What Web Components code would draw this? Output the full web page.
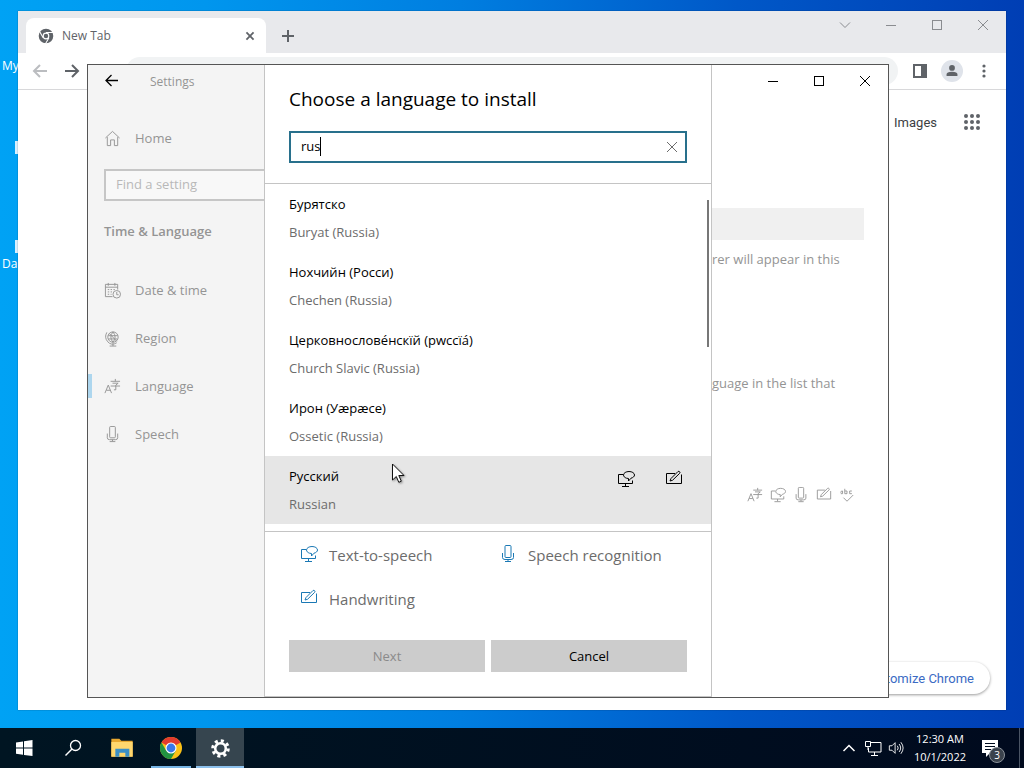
<!DOCTYPE html>
<html lang="en">
<head>
<meta charset="utf-8">
<meta name="viewport" content="width=device-width, initial-scale=1">
<title>Desktop</title>
<style>
  html,body{height:100%;margin:0}
  body{font-family:"Open Sans","Noto Sans",sans-serif;font-size:13px;overflow:hidden}
</style>
</head>
<body>
<desktop-shell>
  <chrome-window></chrome-window>
  <settings-window>
    <language-dialog slot="dialog"></language-dialog>
  </settings-window>
  <task-bar slot="taskbar"></task-bar>
</desktop-shell>

<script>
// ui-icon: inline SVG by name, size comes from the "size" attribute
const tts = '<path d="M6 4.500H1.500V13.500H15.500V10.500M8.500 13.500V16M5 16.500H12"/><path d="M9.500 8.200C7.500 7.500 6.500 6.300 6.500 5C6.500 3 9 1.500 12 1.500S17.500 3 17.500 5C17.500 6.500 16 7.700 14 8.200L11.500 11V8.500Z"/>';
const pen = '<path d="M10 3.500H1.500V13.500H16.500V4.500"/><path d="M5 11L6 8.500 13 1.500Q14 1 14.700 1.800T14.500 3.500L7.500 10.300Z"/>';
const mic = '<rect x="6" y=".5" width="6" height="12" rx="1"/><path d="M3.500 8V12.500Q3.500 14.500 6 14.500H12Q14.500 14.500 14.500 12.500V8M9 14.500V16M6 16.500H12"/>';
const lang = '<path d="M1 16L4.500 7.500 8 16M2.500 13H6.500"/><path d="M7 3.500H17M12 1V3.500M9 5.500H15L12.500 7.500V12.500H10.500M7 8.500H17"/>';
const ICONS = {
  tts, pen, mic, lang,
  back:'<path d="M3.500 8.500H15M8.500 3L3 8.500 8.500 14" stroke-width="1.300"/>',
  home:'<path d="M1.500 8.500L9 1.500 16.500 8.500M3.500 7.500V16.500H7V10.500H11V16.500H14.500V7.500"/>',
  date:'<path d="M9 15.500H1.500V2.500H14.500V8M1.500 5.500H14.500M4.500 1V4M11.500 1V4"/><path d="M4 8H12M4 10.500H9M4 13H8" stroke-dasharray="1.500 1.500"/><circle cx="13.500" cy="13" r="4"/><path d="M13.500 10.500V13.500H15.500"/>',
  region:'<circle cx="9.500" cy="7.500" r="5.500"/><path d="M4.500 6H14.500M4.500 9.500H14M9.500 2Q5 7.500 9.500 13Q14 7.500 9.500 2M5.500 3.500L13.500 12M3 2.500Q0 8 4 12.500T13.500 13.500M9.500 14V17M6 17H13"/>',
  spell:'<path d="M2 6.500Q2 4 4 4.500V7.500H2M6.500 2V7.500H9V4.500H6.500M14.500 4.500H12V7.500H14.500M5 12L9 16 16 9"/>',
  min:'<path d="M4 9.500H14" shape-rendering="crispEdges"/>',
  max:'<rect x="4.500" y="4.500" width="9" height="9" shape-rendering="crispEdges"/>',
  close:'<path d="M4 4L14 14M14 4L4 14"/>',
  down:'<path d="M4 6.500L9 11.500 14 6.500"/>',
  up:'<path d="M3.500 12L9 6.500 14.500 12" stroke-width="1.500"/>',
  plus:'<path d="M9 3V15M3 9H15" stroke-width="2"/>',
  arrowl:'<path d="M3 9H16M9 3L3 9 9 15" stroke-width="2"/>',
  arrowr:'<path d="M2 9H15M9 3L15 9 9 15" stroke-width="2"/>',
  tabx:'<path d="M5 5L13 13M13 5L5 13" stroke-width="2"/>',
  panel:'<path d="M2 2H16V16H2ZM4 4V14H10V4Z" fill="currentColor" fill-rule="evenodd" stroke="none"/>',
  person:'<g fill="currentColor" stroke="none"><circle cx="9" cy="5" r="3.700"/><path d="M2 15.500V13.500Q2 10 9 10T16 13.500V15.500Z"/></g>',
  dots:'<g fill="currentColor" stroke="none"><circle cx="9" cy="4" r="1.600"/><circle cx="9" cy="9" r="1.600"/><circle cx="9" cy="14" r="1.600"/></g>',
  apps:'<g fill="currentColor" stroke="none">'+[3,9,15].map(y=>[3,9,15].map(x=>`<circle cx="${x}" cy="${y}" r="2"/>`).join('')).join('')+'</g>',
  mono:'<circle cx="9" cy="9" r="6" stroke-width="4.400"/><circle cx="9" cy="9" r="2.500" fill="currentColor" stroke="none"/><path d="M9 5H17M5.800 11L1.800 4M12.300 11L8.300 18"  stroke="#fff" stroke-width="1.200"/>',
  win:'<path d="M1 3.400L8 2.400V8.500H1ZM9 2.200L17.500 1V8.500H9ZM1 9.500H8V15.700L1 14.700ZM9 9.500H17.500V17L9 15.900Z" fill="currentColor" stroke="none"/>',
  search:'<circle cx="11.500" cy="6.500" r="5" stroke-width="1.300"/><path d="M8 10L1.500 16.500" stroke-width="1.500"/>',
  folder:'<g stroke="none"><path d="M1 2H7L8.500 3.500H17V15.500H1Z" fill="#e8a830"/><path d="M1 4.500H17V15.500H1Z" fill="#ffd76e"/><path d="M4 9.500H14.500V15.500H11.500V12.500H7V15.500H4Z" fill="#3b8fc6"/></g>',
  chrome:'<g stroke="none"><circle cx="9" cy="9" r="9" fill="#fbc116"/><path d="M9 9L1.200 4.500A9 9 0 0 1 16.800 4.500Z" fill="#e33b2e"/><path d="M1.200 4.500A9 9 0 0 0 9 18L12.900 11.250 9 9 5.100 11.250Z" fill="#229342"/><circle cx="9" cy="9" r="4.500" fill="#fff"/><circle cx="9" cy="9" r="3.600" fill="#3a78ea"/></g>',
  gear:'<circle cx="9" cy="9" r="5" stroke-width="2.400"/><circle cx="9" cy="9" r="7.300" stroke-width="3" stroke-dasharray="2.870 2.870"/>',
  net:'<path d="M6 3.500H17V13H4.500V9M10.500 13V16M7 16.500H14M1.500 2.500H6.500V7.500H1.500ZM4 7.500V11"/>',
  sound:'<path d="M1.500 6.500H4.500L8 3V15L4.500 11.500H1.500Z"/><path d="M10.500 6.500Q12.500 9 10.500 11.500M12.500 4.500Q16 9 12.500 13.500M14.500 2.500Q19.500 9 14.500 15.500"/>',
  note:'<path d="M1 1H17V14H9L5 18V14H1Z" fill="currentColor" stroke="none"/><path d="M4 4.500H14M4 7.500H14M4 10.500H10" stroke="#000c1e"/>'
};

customElements.define('ui-icon', class extends HTMLElement{
  constructor(){ super(); this.attachShadow({mode:'open'}); }
  connectedCallback(){
    const size = this.getAttribute('size') || 18;
    this.shadowRoot.innerHTML = `
      <style>:host{display:inline-flex;flex:none}svg{display:block}</style>
      <svg width="${size}" height="${size}" viewBox="0 0 18 18" fill="none" stroke="currentColor" aria-hidden="true">${ICONS[this.getAttribute('name')]||''}</svg>
    `;
  }
});

// shared reset for controls inside a shadow root
const BASE = `
  *{box-sizing:border-box}
  button{font:inherit;color:inherit;background:none;border:0;padding:0;display:flex;align-items:center;justify-content:center}
  input{font:inherit}
  h1,h2,p,ul{margin:0;padding:0}
  ul{list-style:none}
`;

// desktop-shell: wallpaper, window area and the taskbar under it
customElements.define('desktop-shell', class extends HTMLElement{
  constructor(){
    super(); this.attachShadow({mode:'open'});
    this.shadowRoot.innerHTML = `
      <style>
        ${BASE}
        :host{display:flex;flex-direction:column;height:100vh;min-height:600px}
        .area{flex:1;position:relative;overflow:hidden;background:linear-gradient(90deg,#00a2f4 0,#0096ee 20%,#007ee0 45%,#0058c8 72%,#003eb4 100%)}
        .labels{display:flex;flex-direction:column;gap:178px;padding:56px 0 0 2px;color:#fff;font-size:12px;line-height:20px}
        .sliver{position:absolute;left:15px;width:8px;height:13px;background:#d8f0ff}
        .one{top:141px}.two{top:240px}
      </style>
      <div class="area">
        <div class="labels"><span>My</span><span>Da</span></div>
        <i class="sliver one"></i><i class="sliver two"></i>
        <slot></slot>
        <mouse-pointer></mouse-pointer>
      </div>
      <slot name="taskbar"></slot>
    `;
  }
});

customElements.define('mouse-pointer', class extends HTMLElement{
  constructor(){
    super(); this.attachShadow({mode:'open'});
    this.shadowRoot.innerHTML = `
      <style>:host{display:block;position:absolute;left:392px;top:463px;z-index:3;pointer-events:none}svg{display:block;filter:drop-shadow(1px 1px 1px #0006)}</style>
      <svg width="14" height="21" viewBox="0 0 14 21"><path d="M.5 1V17L4.300 13.500 6.800 19.300 9.300 18.200 6.800 12.500H12Z" fill="#fff" stroke="#111"/></svg>
    `;
  }
});

customElements.define('chrome-window', class extends HTMLElement{
  constructor(){
    super(); this.attachShadow({mode:'open'});
    this.shadowRoot.innerHTML = `
      <style>
        ${BASE}
        :host{position:absolute;inset:11px 18px 18px;display:flex;flex-direction:column;background:#fff;color:#5f6368;box-shadow:0 0 1px #0008}
        .tabs{display:flex;align-items:flex-end;height:42px;background:#e8e9ec;padding-left:8px;flex:none}
        .tab{display:flex;align-items:center;gap:8px;width:240px;height:35px;padding:0 8px 0 12px;background:#fff;border-radius:8px 8px 0 0;font-size:12px}
        .tab span{flex:1}
        .new{width:28px;height:34px;margin-left:8px}
        .caption{display:flex;align-self:flex-start;margin-left:auto;color:#8a8c90}
        .caption button{width:46px;height:28px}
        .tools{display:flex;align-items:center;height:37px;border-bottom:1px solid #d8d8da;padding:0 6px;flex:none}
        .tools button{width:32px;height:32px}
        .dim{color:#bbbdc0}
        .omni{flex:1;min-width:0;height:28px;margin:0 6px 0 38px;border:0;border-radius:14px;background:#f1f3f4}
        .avatar ui-icon{background:#dfe3ea;border-radius:50%;padding:4px}
        .page{flex:1;display:flex;flex-direction:column;align-items:flex-end;justify-content:space-between;padding:16px}
        .links{display:flex;align-items:center;gap:26px;height:32px;padding-right:9px;font:13px Roboto,sans-serif}
        .links a{color:#3c4043;text-decoration:none}
        .custom{height:32px;padding:0 16px;border-radius:16px;box-shadow:0 1px 3px #0006;color:#3b6bc4;font:13px Roboto,sans-serif;background:#fff}
      </style>
      <div class="tabs">
        <div class="tab"><ui-icon name="mono" size="16"></ui-icon><span>New Tab</span><button aria-label="Close tab"><ui-icon name="tabx" size="16"></ui-icon></button></div>
        <button class="new" aria-label="New tab"><ui-icon name="plus"></ui-icon></button>
        <div class="caption">
          <button aria-label="Search tabs"><ui-icon name="down"></ui-icon></button>
          <button aria-label="Minimize"><ui-icon name="min"></ui-icon></button>
          <button aria-label="Maximize"><ui-icon name="max"></ui-icon></button>
          <button aria-label="Close"><ui-icon name="close"></ui-icon></button>
        </div>
      </div>
      <div class="tools">
        <button class="dim" aria-label="Back"><ui-icon name="arrowl"></ui-icon></button>
        <button aria-label="Forward"><ui-icon name="arrowr"></ui-icon></button>
        <input class="omni" aria-label="Address">
        <button aria-label="Side panel"><ui-icon name="panel"></ui-icon></button>
        <button class="avatar" aria-label="Profile"><ui-icon name="person" size="14"></ui-icon></button>
        <button aria-label="Menu"><ui-icon name="dots"></ui-icon></button>
      </div>
      <div class="page">
        <div class="links"><a href="#">Images</a><button aria-label="Apps"><ui-icon name="apps"></ui-icon></button></div>
        <button class="custom">Customize Chrome</button>
      </div>
    `;
  }
});

// nav-item: sidebar row, icon attribute + slotted label
customElements.define('nav-item', class extends HTMLElement{
  constructor(){ super(); this.attachShadow({mode:'open'}); }
  connectedCallback(){
    this.shadowRoot.innerHTML = `
      <style>
        :host{display:block}
        a{display:flex;align-items:center;gap:14px;height:48px;padding-left:12px;border-left:4px solid transparent;color:inherit;text-decoration:none;line-height:20px}
        :host([selected]) a{background:linear-gradient(#add6ee,#add6ee) left center/4px 24px no-repeat border-box}
      </style>
      <a href="#"><ui-icon name="${this.getAttribute('icon')}" size="17"></ui-icon><slot></slot></a>
    `;
  }
});

customElements.define('settings-window', class extends HTMLElement{
  constructor(){
    super(); this.attachShadow({mode:'open'});
    this.shadowRoot.innerHTML = `
      <style>
        ${BASE}
        :host{position:absolute;inset:64px 135px 30px 87px;display:grid;grid-template-columns:1fr 448px 1fr;border:1px solid #555;background:#fff;z-index:1;color:#949494}
        nav,main{min-width:0;overflow:hidden}
        nav{background:#f4f4f4}
        .title{display:flex;align-items:center;height:32px}
        .back{width:48px;height:32px;color:#000}
        .title span{font-size:12px;padding-left:14px}
        .home{display:block;margin-top:17px}
        .find{display:block;height:32px;width:240px;margin:7px 0 0 16px;padding:0 10px 2px;border:2px solid #c6c6c6;background:#f8f8f8}
        .find::placeholder{color:#b8b8b8;opacity:1}
        h2{font-size:13px;font-weight:600;line-height:20px;margin:20px 0 25px 16px}
        .caption{display:flex;justify-content:flex-end;color:#000}
        .caption button{width:46px;height:32px}
        .select{display:block;appearance:none;width:calc(100% - 24px);height:32px;margin-top:111px;border:0;border-radius:0;background:#eaeaea}
        p{line-height:20px;white-space:nowrap}
        .first{margin-top:9px}.second{margin-top:104px}
        .icons{display:flex;justify-content:flex-end;gap:7px;margin-top:94px;padding-right:33px}
      </style>
      <nav>
        <div class="title"><button class="back" aria-label="Back"><ui-icon name="back"></ui-icon></button><span>Settings</span></div>
        <nav-item class="home" icon="home">Home</nav-item>
        <input class="find" placeholder="Find a setting" aria-label="Find a setting">
        <h2>Time &amp; Language</h2>
        <nav-item icon="date">Date &amp; time</nav-item>
        <nav-item icon="region">Region</nav-item>
        <nav-item icon="lang" selected>Language</nav-item>
        <nav-item icon="mic">Speech</nav-item>
      </nav>
      <slot name="dialog"></slot>
      <main>
        <div class="caption">
          <button aria-label="Minimize"><ui-icon name="min"></ui-icon></button>
          <button aria-label="Maximize"><ui-icon name="max"></ui-icon></button>
          <button aria-label="Close"><ui-icon name="close"></ui-icon></button>
        </div>
        <select class="select" aria-label="Windows display language" disabled></select>
        <p class="first">rer will appear in this</p>
        <p class="second">guage in the list that</p>
        <div class="icons">
          <ui-icon name="lang" size="16"></ui-icon><ui-icon name="tts" size="16"></ui-icon><ui-icon name="mic" size="16"></ui-icon><ui-icon name="pen" size="16"></ui-icon><ui-icon name="spell" size="16"></ui-icon>
        </div>
      </main>
    `;
  }
});

// language-row: native name in the slot, English name in the "english" attribute
customElements.define('language-row', class extends HTMLElement{
  constructor(){ super(); this.attachShadow({mode:'open'}); }
  connectedCallback(){
    const icons = (this.getAttribute('features')||'').split(' ').filter(Boolean);
    this.shadowRoot.innerHTML = `
      <style>
        :host{display:flex;justify-content:space-between;padding:6px 28px 6px 24px;line-height:28px}
        :host([active]){background:#e6e6e6}
        .name{color:#000}
        .english{color:#6c6c6c}
        .icons{display:flex;gap:30px;padding-top:8px;color:#000}
      </style>
      <div><div class="name"><slot></slot></div><div class="english">${this.getAttribute('english')}</div></div>
      <div class="icons">${icons.map(n=>`<ui-icon name="${n}"></ui-icon>`).join('')}</div>
    `;
  }
});

const LANGUAGES = [
  {name:'Бурятско', english:'Buryat (Russia)'},
  {name:'Нохчийн (Росси)', english:'Chechen (Russia)'},
  {name:'Церковнослове́нскїй (рwссїа́)', english:'Church Slavic (Russia)'},
  {name:'Ирон (Уæрæсе)', english:'Ossetic (Russia)'},
  {name:'Русский', english:'Russian', features:'tts pen', active:true}
];

customElements.define('language-dialog', class extends HTMLElement{
  constructor(){
    super(); this.attachShadow({mode:'open'});
    const rows = LANGUAGES.map(l=>`<li><language-row english="${l.english}" features="${l.features||''}" ${l.active?'active':''}>${l.name}</language-row></li>`).join('');
    this.shadowRoot.innerHTML = `
      <style>
        ${BASE}
        :host{display:flex;flex-direction:column;min-height:0;background:#fff;border:1px solid #c4c4c4;border-top:0;color:#6c6c6c}
        header{padding:20px 24px;border-bottom:1px solid #c4c4c4}
        h1{font-size:19px;font-weight:400;line-height:28px;color:#000}
        .field{position:relative;display:flex;align-items:center;height:32px;margin-top:18px;border:2px solid #28708c}
        .field input{flex:1;min-width:0;border:0;outline:0;padding:0 10px 2px;background:none;color:#000}
        .field button{width:26px;height:28px}
        .caret{position:absolute;left:29px;top:4px;width:1px;height:19px;background:#000}
        .list{position:relative;flex:1;min-height:0;overflow:hidden}
        .thumb{position:absolute;right:2px;top:16px;width:2px;height:147px;background:#777}
        footer{border-top:1px solid #c4c4c4;padding:1px 24px 24px}
        .legend{display:grid;grid-template-columns:1fr 1fr;font-size:15px}
        .legend li{display:flex;align-items:center;gap:11px;height:44px;padding-left:11px}
        .legend ui-icon{color:#1a78b4;padding-bottom:2px}
        .actions{display:grid;grid-template-columns:1fr 1fr;gap:6px;margin-top:19px}
        .actions button{height:32px;background:#ccc;color:#000}
        .actions button:disabled{color:#8a8a8a}
      </style>
      <header>
        <h1>Choose a language to install</h1>
        <div class="field">
          <input value="rus" aria-label="Type a language name">
          <i class="caret"></i>
          <button aria-label="Clear"><ui-icon name="close"></ui-icon></button>
        </div>
      </header>
      <div class="list"><ul>${rows}</ul><i class="thumb"></i></div>
      <footer>
        <ul class="legend">
          <li><ui-icon name="tts"></ui-icon>Text-to-speech</li>
          <li><ui-icon name="mic"></ui-icon>Speech recognition</li>
          <li><ui-icon name="pen"></ui-icon>Handwriting</li>
        </ul>
        <div class="actions"><button disabled>Next</button><button>Cancel</button></div>
      </footer>
    `;
  }
});

customElements.define('task-bar', class extends HTMLElement{
  constructor(){
    super(); this.attachShadow({mode:'open'});
    this.shadowRoot.innerHTML = `
      <style>
        ${BASE}
        :host{display:flex;justify-content:space-between;height:40px;flex:none;background:linear-gradient(90deg,#001522,#000a1e);color:#fff}
        .apps{display:flex;gap:1px}
        .apps button{width:48px;height:40px}
        .open{background:linear-gradient(#76b4e4,#76b4e4) center bottom/40px 2px no-repeat}
        .apps .active{background:linear-gradient(#8cc0ec,#8cc0ec) center bottom/100% 2px no-repeat #36454f}
        .tray{display:flex;align-items:center;gap:6px;padding-right:4px}
        .clock{font-size:11px;line-height:18px;text-align:center;padding-left:4px}
        .note{position:relative;width:36px;height:40px}
        .badge{position:absolute;left:17px;top:19px;width:16px;height:16px;border-radius:50%;background:#3a424c;border:1px solid #8b929a;font-size:10px;line-height:14px}
        .peek{width:1px;height:40px;margin-left:5px;background:#4a5464}
      </style>
      <div class="apps">
        <button aria-label="Start"><ui-icon name="win"></ui-icon></button>
        <button aria-label="Search"><ui-icon name="search"></ui-icon></button>
        <button aria-label="File Explorer"><ui-icon name="folder" size="24"></ui-icon></button>
        <button class="open" aria-label="Chrome"><ui-icon name="chrome" size="22"></ui-icon></button>
        <button class="active" aria-label="Settings"><ui-icon name="gear" size="19"></ui-icon></button>
      </div>
      <div class="tray">
        <ui-icon name="up"></ui-icon><ui-icon name="net"></ui-icon><ui-icon name="sound" size="16"></ui-icon>
        <div class="clock">12:30 AM<br>10/1/2022</div>
        <button class="note" aria-label="Notifications"><ui-icon name="note"></ui-icon><span class="badge">3</span></button>
        <div class="peek"></div>
      </div>
    `;
  }
});
</script>
</body>
</html>
